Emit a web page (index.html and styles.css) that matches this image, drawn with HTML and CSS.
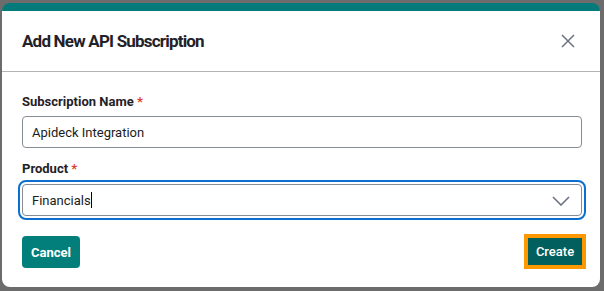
FILE: index.html
```html
<!DOCTYPE html>
<html>
<head>
<meta charset="utf-8">
<link rel="stylesheet" href="styles.css">
</head>
<body>
<div class="modal">
  <div class="header">
    <h2 class="title">Add New API Subscription</h2>
    <svg class="close" width="14" height="14" viewBox="0 0 14 14"><path d="M1 1L13 13M13 1L1 13" stroke="#6b7280" stroke-width="1.5" fill="none"/></svg>
  </div>
  <div class="body">
    <div class="label">Subscription Name <span class="req">*</span></div>
    <div class="field">Apideck Integration</div>
    <div class="label second">Product <span class="req">*</span></div>
    <div class="field select"><span>Financials</span><span class="caret"></span>
      <svg class="chev" width="18" height="10" viewBox="0 0 18 10"><path d="M1 1L9 9L17 1" stroke="#6b7280" stroke-width="1.6" fill="none"/></svg>
    </div>
  </div>
  <div class="footer">
    <div class="btn cancel">Cancel</div>
    <div class="btn create">Create</div>
  </div>
</div>
</body>
</html>
```
FILE: styles.css
```css
html, body { margin: 0; padding: 0; }
body {
  background: #6c6c6c;
  width: 604px;
  height: 291px;
  overflow: hidden;
  font-family: Roboto, "Liberation Sans", sans-serif;
}
.modal {
  box-sizing: border-box;
  margin: 3px 0 0 2px;
  width: 598px;
  height: 284px;
  background: #fff;
  border-top: 8px solid #047b7a;
  border-radius: 8px;
}
.header {
  height: 60px;
  border-bottom: 1px solid #b4b4b8;
  display: flex;
  align-items: center;
  justify-content: space-between;
  padding: 0 25px 0 20px;
}
.title {
  margin: 0;
  font-size: 17px;
  font-weight: 700;
  color: #1f2228;
  letter-spacing: -0.8px;
}
.body {
  padding: 20px 18px 0 20px;
}
.label {
  font-size: 13px;
  line-height: 20px;
  font-weight: 700;
  color: #1f2228;
  margin-bottom: 4px;
}
.label.second { margin-top: 11px; margin-bottom: 5px; }
.req { color: #e0412d; }
.field {
  box-sizing: border-box;
  height: 32px;
  border: 1px solid #868c93;
  border-radius: 4px;
  padding: 0 9px;
  font-size: 13px;
  color: #1a1c20;
  display: flex;
  align-items: center;
}
.select {
  position: relative;
  outline: 2px solid #0b6fcf;
  outline-offset: 2px;
}
.caret {
  display: inline-block;
  width: 1px;
  height: 16px;
  background: #000;
}
.chev {
  position: absolute;
  right: 11px;
  top: 11px;
}
.footer {
  display: flex;
  justify-content: space-between;
  padding: 20px 18px 0 20px;
}
.btn {
  box-sizing: border-box;
  height: 32px;
  border-radius: 4px;
  color: #fff;
  font-size: 13px;
  font-weight: 700;
  display: flex;
  align-items: center;
  justify-content: center;
}
.cancel {
  width: 58px;
  background: #027f7b;
}
.create {
  width: 54px;
  height: 27px;
  margin: 2px 0 0 0;
  border-radius: 0;
  background: #01605d;
  font-weight: 500;
  outline: 4px solid #fd9800;
}
```
